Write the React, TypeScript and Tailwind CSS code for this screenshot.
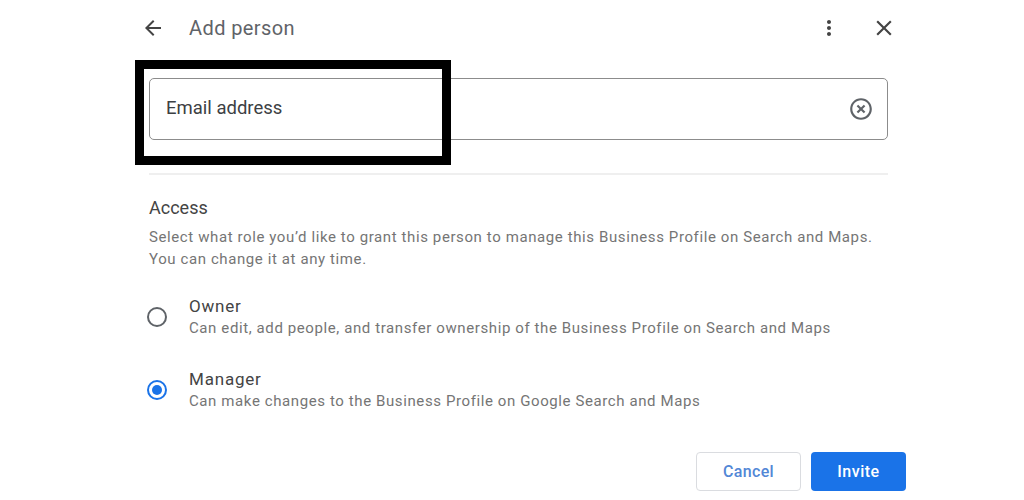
import { MdArrowBack, MdMoreVert, MdClose, MdHighlightOff } from "react-icons/md";

function Radio({ checked }: { checked?: boolean }) {
  return checked ? (
    <span className="w-[20px] h-[20px] rounded-full border-2 border-[#1a73e8] flex items-center justify-center shrink-0">
      <span className="w-[10px] h-[10px] rounded-full bg-[#1a73e8]" />
    </span>
  ) : (
    <span className="w-[20px] h-[20px] rounded-full border-2 border-[#5f6368] shrink-0" />
  );
}

const roles = [
  {
    name: "Owner",
    desc: "Can edit, add people, and transfer ownership of the Business Profile on Search and Maps",
    checked: false,
  },
  {
    name: "Manager",
    desc: "Can make changes to the Business Profile on Google Search and Maps",
    checked: true,
  },
];

export default function App() {
  return (
    <div
      className="w-[1024px] h-[500px] bg-white overflow-hidden"
      style={{ fontFamily: "Roboto, 'Noto Sans', sans-serif" }}
    >
      <div className="ml-[149px] w-[739px] flex flex-col">
        {/* Header */}
        <header className="h-[55px] flex items-center">
          <MdArrowBack size={24} className="-ml-[8px] text-[#444]" />
          <span className="ml-[24px] text-[20px] tracking-[0.4px] text-[#5f6368]">Add person</span>
          <div className="ml-auto -mr-[9px] flex items-center gap-[30px]">
            <MdMoreVert size={24} className="text-[#444]" />
            <MdClose size={26} className="text-[#444]" />
          </div>
        </header>

        {/* Email field */}
        <div className="relative mt-[23px] h-[62px] border-[1.5px] border-[#8c8c8c] rounded-[5px] flex items-center pl-[16px] pr-[13px]">
          <span className="text-[18.5px] text-[#3c4043]">Email address</span>
          <MdHighlightOff size={26} className="ml-auto text-[#5f6368]" />
          <div className="absolute left-[-15px] top-[-19px] w-[316px] h-[105px] border-[9px] border-black" />
        </div>

        <div className="mt-[33px] h-[2px] bg-[#efefef]" />

        {/* Access */}
        <div className="mt-[22px] text-[18px] leading-[22px] text-[#444]">Access</div>
        <p className="mt-[7px] text-[15px] tracking-[0.6px] leading-[22px] text-[#757575]">
          Select what role you’d like to grant this person to manage this Business Profile on Search and Maps.
          <br />
          You can change it at any time.
        </p>

        <div className="mt-[25px] flex flex-col gap-[29px]">
          {roles.map((r) => (
            <div key={r.name} className="flex items-center -ml-[2px]">
              <Radio checked={r.checked} />
              <div className="ml-[22px] flex flex-col">
                <span className="text-[17px] tracking-[0.8px] leading-[22px] text-[#444]">{r.name}</span>
                <span className="text-[15px] tracking-[0.6px] leading-[22px] text-[#757575] whitespace-nowrap">
                  {r.desc}
                </span>
              </div>
            </div>
          ))}
        </div>

        {/* Actions */}
        <div className="mt-[40px] -mr-[18px] flex justify-end gap-[10px]">
          <button className="w-[105px] h-[39px] rounded-[4px] border border-[#dadce0] text-[16px] tracking-[0.3px] font-medium text-[#5287d6]">
            Cancel
          </button>
          <button className="w-[95px] h-[39px] rounded-[4px] bg-[#1a73e8] text-[16px] tracking-[0.5px] font-medium text-white">
            Invite
          </button>
        </div>
      </div>
    </div>
  );
}
